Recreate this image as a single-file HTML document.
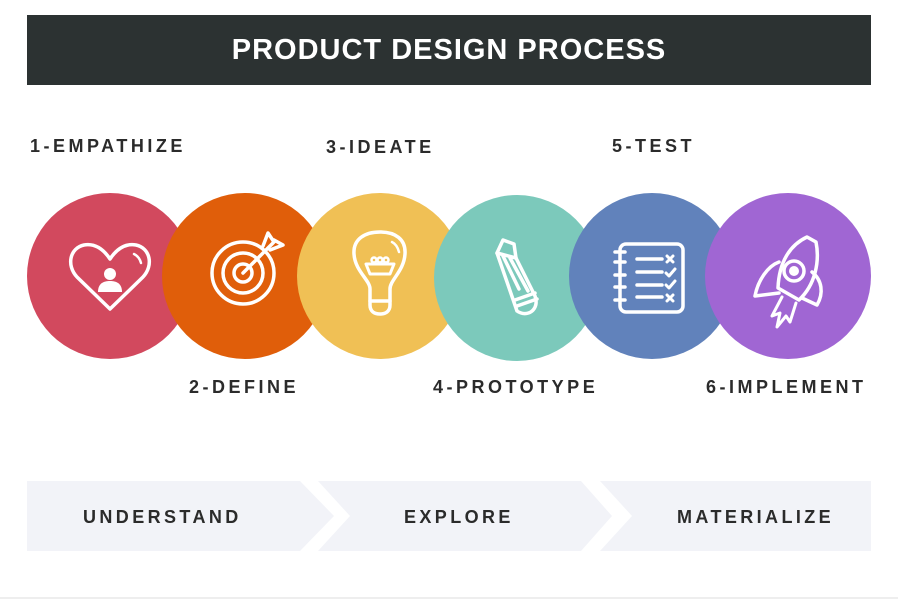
<!DOCTYPE html>
<html><head><meta charset="utf-8"><style>
*{margin:0;padding:0;box-sizing:border-box}
body{width:898px;height:600px;background:#fff;position:relative;overflow:hidden;font-family:"Liberation Sans",sans-serif}
.banner{position:absolute;left:27px;top:15px;width:844px;height:70px;background:#2c3232;color:#fff;font-weight:bold;font-size:29px;text-align:center;line-height:70px;letter-spacing:1px}
.lbl{position:absolute;font-weight:bold;font-size:18px;letter-spacing:3.5px;color:#2b2b2b;white-space:nowrap;line-height:20px}
.c{position:absolute;border-radius:50%;width:166px;height:166px}
.seg{position:absolute;font-weight:bold;font-size:18px;letter-spacing:3.4px;color:#2b2b2b;top:507px;line-height:20px;white-space:nowrap}
</style></head><body>
<div class="banner">PRODUCT DESIGN PROCESS</div>
<div class="lbl" style="left:30px;top:136px">1-EMPATHIZE</div>
<div class="lbl" style="left:326px;top:137px">3-IDEATE</div>
<div class="lbl" style="left:612px;top:136px">5-TEST</div>
<div class="lbl" style="left:189px;top:377px">2-DEFINE</div>
<div class="lbl" style="left:433px;top:377px">4-PROTOTYPE</div>
<div class="lbl" style="left:706px;top:377px">6-IMPLEMENT</div>

<div class="c" style="left:27px;top:193px;background:#d2495e"></div>
<div class="c" style="left:162px;top:193px;background:#e05e0a"></div>
<div class="c" style="left:297px;top:193px;background:#f0c055"></div>
<div class="c" style="left:434px;top:195px;background:#7cc9bb"></div>
<div class="c" style="left:569px;top:193px;background:#6182bb"></div>
<div class="c" style="left:705px;top:193px;background:#a066d3"></div>

<svg width="898" height="600" style="position:absolute;left:0;top:0" fill="none" stroke="#fff" stroke-width="3.5" stroke-linecap="round" stroke-linejoin="round">
<path d="M110 309 L77 277 C66 265 70 248 84 245 C96 243 104 250 110 259 C116 250 124 243 136 245 C150 248 154 265 143 277 Z"/>
<path d="M134 254 C138 256 140 259 141 263" stroke-width="2.5"/>
<circle cx="110" cy="274" r="6" fill="#fff" stroke="none"/>
<path d="M98 292 C98 283 104 281 110 281 C116 281 122 283 122 292 Z" fill="#fff" stroke="none"/>
<circle cx="243" cy="273" r="31"/>
<circle cx="243" cy="273" r="20"/>
<circle cx="243" cy="273" r="9"/>
<path d="M243 273 L273 243"/>
<path d="M263 246 L268 233 L274 242 M270 250 L283 245 L274 240"/>
<path d="M370 301 L370 289 C370 280 355 271 354 254 C353 239 365 232 380 232 C395 232 406 239 405 254 C404 271 390 280 390 289 L390 301"/>
<path d="M370 301 L390 301 L390 305 C390 311 386 314 380 314 C374 314 370 311 370 305 Z"/>
<path d="M392 242 C396 244 398 248 399 252" stroke-width="2.5"/>
<path d="M366 264 L394 264 L390 274 L370 274 Z" stroke-width="3"/>
<circle cx="374" cy="260" r="2.5" stroke-width="2.5"/><circle cx="380" cy="260" r="2.5" stroke-width="2.5"/><circle cx="386" cy="260" r="2.5" stroke-width="2.5"/>
<path d="M497 253 L503 240 L514 244 L516 258 L535 296 C540 310 527 318 517 311 Z"/>
<path d="M497 253 L516 258 M503 256 L519 289 M510 258 L528 291 M515 300 L535 293 M517 306 L537 299"/>
<rect x="620" y="244" width="63" height="68" rx="6"/>
<path d="M615 252 H625 M615 262 H625 M615 275 H625 M615 287 H625 M615 300 H625"/>
<path d="M637 259 H662 M637 272 H662 M637 285 H662 M637 297 H662"/>
<path d="M667 256 L673 262 M673 256 L667 262 M667 295 L673 301 M673 295 L667 301 M666 273 L669 276 L675 269 M666 285 L669 288 L675 281" stroke-width="3"/>
<path d="M807 237 C790 245 779 262 778 288 L799 300 C815 285 820 262 816 242 Z"/>
<circle cx="794" cy="271" r="10"/>
<circle cx="794" cy="271" r="5" fill="#fff" stroke="none"/>
<path d="M779 262 C768 266 758 280 755 296 L779 293"/>
<path d="M812 272 C822 280 824 293 817 305 L802 298"/>
<path d="M782 297 L772 316 L780 313 L777 327 L786 316 L790 322 L796 303" stroke-width="3"/>
</svg>

<svg width="898" height="600" style="position:absolute;left:0;top:0">
<polygon points="27,481 300,481 334,516 300,551 27,551" fill="#f2f3f8"/>
<polygon points="318,481 581,481 612,516 581,551 318,551 350,516" fill="#f2f3f8"/>
<polygon points="600,481 871,481 871,551 600,551 632,516" fill="#f2f3f8"/>
<line x1="0" y1="598" x2="898" y2="598" stroke="#eee" stroke-width="2"/>
</svg>
<div class="seg" style="left:83px">UNDERSTAND</div>
<div class="seg" style="left:404px">EXPLORE</div>
<div class="seg" style="left:677px">MATERIALIZE</div>
</body></html>
